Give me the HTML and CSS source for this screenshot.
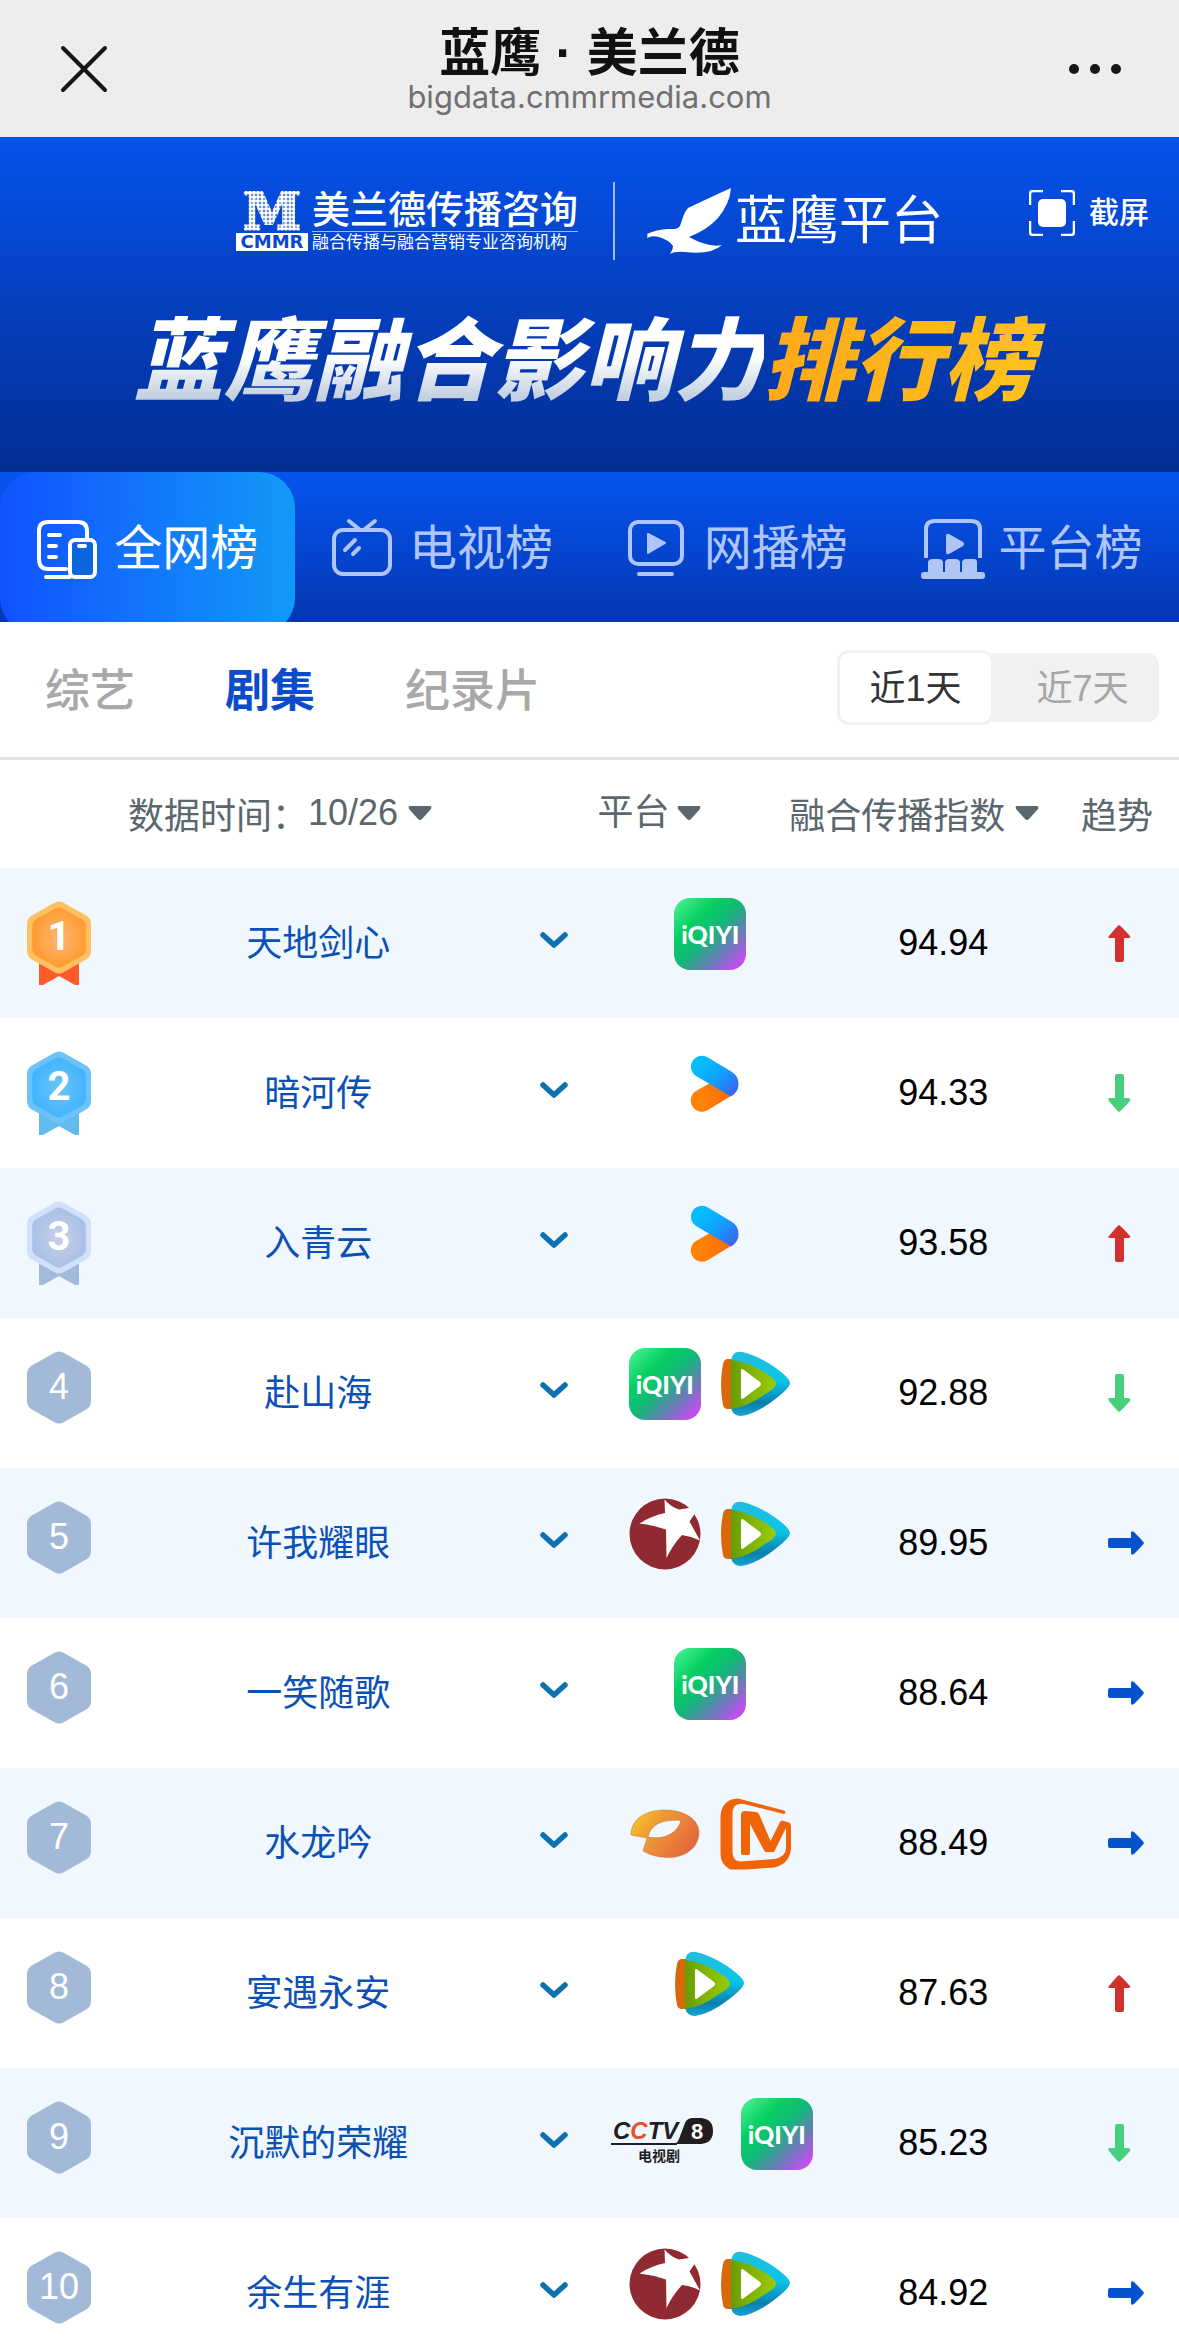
FILE: index.html
```html
<!DOCTYPE html>
<html lang="zh-CN">

<head>
  <meta charset="UTF-8" />
  <meta name="viewport" content="width=device-width, initial-scale=1.0" />
  <title>蓝鹰 · 美兰德</title>
  <link rel="stylesheet" href="styles.css">
</head>

<body>
  <!-- shared icons -->
  <svg class="sprite" width="0" height="0" aria-hidden="true">
    <defs>
      <linearGradient id="g-youku" x1="0" y1="0" x2="1" y2="0.8">
        <stop offset="0.2" stop-color="#04bdfd" />
        <stop offset="0.6" stop-color="#12a0ff" />
        <stop offset="1" stop-color="#3865f0" />
      </linearGradient>
      <linearGradient id="g-youku2" x1="0" y1="0" x2="1" y2="0">
        <stop offset="0.3" stop-color="#ff8205" />
        <stop offset="1" stop-color="#ff6a08" />
      </linearGradient>
      <linearGradient id="g-cyan" x1="0" y1="0" x2="0" y2="1">
        <stop offset="0" stop-color="#22bde0" />
        <stop offset="0.45" stop-color="#0cc4ea" />
        <stop offset="0.8" stop-color="#0880ac" />
        <stop offset="1" stop-color="#18a4cc" />
      </linearGradient>
      <linearGradient id="g-green" x1="0" y1="0" x2="1" y2="0">
        <stop offset="0" stop-color="#659a06" />
        <stop offset="0.3" stop-color="#7aad04" />
        <stop offset="1" stop-color="#9acb08" />
      </linearGradient>
      <linearGradient id="g-mango" x1="0" y1="0" x2="1" y2="0.5">
        <stop offset="0" stop-color="#f9d023" />
        <stop offset="0.4" stop-color="#ee9c36" />
        <stop offset="1" stop-color="#e46a3c" />
      </linearGradient>
      <radialGradient id="g-medal1">
        <stop offset="0" stop-color="#ffb877" />
        <stop offset="1" stop-color="#ff9b30" />
      </radialGradient>
      <radialGradient id="g-medal2">
        <stop offset="0" stop-color="#6dc4fa" />
        <stop offset="1" stop-color="#42b4fd" />
      </radialGradient>
      <radialGradient id="g-medal3">
        <stop offset="0" stop-color="#c9cfe8" />
        <stop offset="1" stop-color="#a9c0e6" />
      </radialGradient>
      <pattern id="dots" width="4" height="4" patternUnits="userSpaceOnUse">
        <circle cx="2" cy="2" r="2" fill="#fff" />
      </pattern>
      <clipPath id="disc">
        <circle cx="36" cy="36" r="36" />
      </clipPath>
    </defs>

    <symbol id="hex" viewBox="0 0 64 73">
      <path d="M27 2 Q32 -1 37 2 L60 15 Q64 18 64 23 V50 Q64 55 60 58 L37 71 Q32 74 27 71 L4 58 Q0 55 0 50 V23 Q0 18 4 15Z" />
    </symbol>
    <symbol id="ribbon" viewBox="0 0 40 28">
      <path d="M0 0 H40 V28 H36 L20 19 L4 28 H0Z" />
    </symbol>
    <symbol id="chevron" viewBox="0 0 28 18">
      <path d="M3 4 L14 14 L25 4" fill="none" stroke="#0c71b0" stroke-width="5.500" stroke-linecap="round" stroke-linejoin="round" />
    </symbol>
    <symbol id="caret" viewBox="0 0 24 14">
      <path d="M2 0 H22 Q24 0 23 3 L14 13 Q12 15 10 13 L1 3 Q0 0 2 0Z" fill="#5a676d" />
    </symbol>
    <symbol id="up" viewBox="0 0 36 38">
      <path d="M11 1 Q12 1 22 12 Q23 14 20 14 H16 V36 Q16 38 14 38 H9 Q7 38 7 36 V14 H2 Q-1 14 1 12 Q10 1 11 1Z" fill="#d22f2f" />
    </symbol>
    <symbol id="down" viewBox="0 0 36 38">
      <path d="M11 38 Q12 38 22 27 Q23 24 20 24 H16 V2 Q16 0 14 0 H9 Q7 0 7 2 V24 H2 Q-1 24 1 27 Q10 38 11 38Z" fill="#46d07c" />
    </symbol>
    <symbol id="flat" viewBox="0 0 36 38">
      <path d="M36 19 Q36 20 26 30 Q23 32 23 29 V24 H2 Q0 24 0 22 V16 Q0 14 2 14 H23 V9 Q23 6 26 8 Q36 18 36 19Z" fill="#0552cf" />
    </symbol>

    <symbol id="youku" viewBox="0 0 72 72">
      <path d="M36 35 L57 48 L34 62 A11 11 0 0 1 22 43Z" fill="url(#g-youku2)" />
      <path d="M34 9.500 L58 24 Q64.500 28 64.500 36 Q64.500 44 57 48.500 L22 28 A11 11 0 0 1 34 9.500Z" fill="url(#g-youku)" />
    </symbol>
    <symbol id="tencent" viewBox="0 0 72 72">
      <path d="M14 11 H8 Q4 11 3 16 Q-1 36 3 57 Q4 61 8 61 H14Z" fill="#d86808" />
      <path d="M11 12 Q13 2 22 4 Q36 7 53 18 Q70 30 70 35 Q70 40 54 52 Q36 66 21 68 Q13 68 11 60Z" fill="url(#g-cyan)" />
      <path d="M11 12 Q26 13 44 24 Q56 31 56 36 Q56 40 45 46 Q28 59 11 61Z" fill="url(#g-green)" />
      <path d="M21 22 Q22 20 24 22 L40 34 Q42 36 40 38 L24 50 Q22 52 21 50Z" fill="#fff" />
    </symbol>
    <symbol id="star" viewBox="0 0 72 72">
      <circle cx="36" cy="36" r="35.500" fill="#8f2a33" />
      <path d="M35.500 1.500 Q42 9 50 11.500 L60 10 L72 2 L65.500 16 L60.500 23.500 L71 42.500 Q62 38 53 37 Q43 48 37.500 60 L37 31.500 Q24 27 10.500 25.500 Q22 18 36 15Z" fill="#fff" clip-path="url(#disc)" />
    </symbol>
    <symbol id="hunan" viewBox="0 0 72 72">
      <path fill-rule="evenodd" d="M2 37 C2 20 18 12 36 12 C56 12 70 22 70 34 C70 50 56 60 38 59.500 Q24 59 14 53 L18 40Z M19 39 C22 26 34 21 52 22.500 C48 36 34 42 19 39Z" fill="url(#g-mango)" stroke="#b97832" stroke-width="0.500" />
    </symbol>
    <symbol id="mgtv" viewBox="0 0 72 72">
      <path d="M64 16 L24 6 Q12.500 4 12.500 16 V54 Q12.500 63.500 21 63.500 L54 61 Q66 59 66 50 V30 L54 54 H45 L30 26 V55 Q30 57 27 57 H23 Q21 57 21 55 V17 Q21 13 25 13 L36 14 Q38 14.500 39 16 L50.500 43 L60 24 Q61 22 64 23 L69 24.500 Q71 25 71 29 V50 Q70 66 54 69.500 L26 71.500 H10 Q0.500 66 0.500 56 V18 Q2 1 18 0.500 L64 12.500 Q67 14 64 16Z" fill="#ee6406" />
    </symbol>
  </svg>

  <header class="topbar">
    <button class="bar-btn" aria-label="关闭">
      <svg width="54" height="54" viewBox="0 0 54 54">
        <path d="M6 6 L48 48 M48 6 L6 48" stroke="#161616" stroke-width="4" stroke-linecap="round" />
      </svg>
    </button>
    <div class="bar-text">
      <h1>蓝鹰 · 美兰德</h1>
      <p>bigdata.cmmrmedia.com</p>
    </div>
    <button class="bar-btn more" aria-label="更多">
      <svg width="54" height="54" viewBox="0 0 54 54" fill="#161616">
        <circle cx="6" cy="27" r="5" />
        <circle cx="27" cy="27" r="5" />
        <circle cx="48" cy="27" r="5" />
      </svg>
    </button>
  </header>

  <section class="banner">
    <div class="logos">
      <div class="logo-cmmr">
        <svg width="72" height="60" viewBox="0 0 72 60">
          <text x="36" y="38" text-anchor="middle" font-family="DejaVu Serif, serif" font-weight="700" font-size="52" fill="url(#dots)" stroke="url(#dots)" stroke-width="3">M</text>
          <rect y="42" width="72" height="18" fill="#fff" />
          <text x="36" y="57" text-anchor="middle" font-family="DejaVu Sans, sans-serif" font-weight="700" font-size="18" fill="#0848cc">CMMR</text>
        </svg>
        <div class="cmmr-text">
          <strong>美兰德传播咨询</strong>
          <small>融合传播与融合营销专业咨询机构</small>
        </div>
      </div>
      <span class="logo-line"></span>
      <div class="logo-eagle">
        <svg width="84" height="66" viewBox="0 0 84 66" fill="#fff">
          <path d="M84 0 Q64 9 41 20 Q38 23 36 29 L33 38 Q31 41 28 41 H20 Q8 42 0 46 Q1 47 0 50 Q5 47 12 49 Q22 52 26 58 Q26 62 23 66 Q28 63 38 64 Q64 67 75 57 Q62 60 42 49 Q60 42 71 30 Q83 15 84 0Z" />
        </svg>
        <span>蓝鹰平台</span>
      </div>
      <button class="shot">
        <svg width="46" height="46" viewBox="0 0 46 46">
          <path d="M1 15 V4 Q1 1 4 1 H14 M32 1 H42 Q45 1 45 4 V15 M45 31 V42 Q45 45 42 45 H32 M14 45 H4 Q1 45 1 42 V31" fill="none" stroke="#fff" stroke-width="2.500" />
          <rect x="9" y="9" width="28" height="28" rx="5" fill="#fff" />
        </svg>
        <span>截屏</span>
      </button>
    </div>
    <h2 class="slogan"><span>蓝鹰融合影响力</span><em>排行榜</em></h2>
  </section>

  <nav class="tabs">
    <a class="tab active" href="#">
      <svg width="64" height="64" viewBox="0 0 64 64" fill="none" stroke="#fff" stroke-width="4" stroke-linecap="round">
        <path d="M30 54 H12 Q3 54 3 44 V16 Q3 7 12 7 H42 Q51 7 51 16 V24" />
        <path d="M13 20 H24 M13 31 H20 M13 42 H20" />
        <path d="M10 62 H34" />
        <rect x="34" y="25" width="25" height="37" rx="5" fill="#0a66dc" />
        <path d="M43 31 H49" />
      </svg>
      <span>全网榜</span>
    </a>
    <a class="tab" href="#">
      <svg width="64" height="64" viewBox="0 0 64 64" fill="none" stroke="#afc5ff" stroke-width="4" stroke-linecap="round">
        <rect x="3" y="15" width="56" height="44" rx="9" />
        <path d="M18 6 L28 14 M44 6 L34 14 M14 35 L24 25 M22 39 L28 33" />
      </svg>
      <span>电视榜</span>
    </a>
    <a class="tab" href="#">
      <svg width="64" height="64" viewBox="0 0 64 64" fill="none" stroke="#afc5ff" stroke-width="4" stroke-linecap="round">
        <rect x="4" y="7" width="52" height="42" rx="8" />
        <path d="M13 59 H46" />
        <path d="M22 19 L39 28 L22 38Z" fill="#afc5ff" stroke-width="2" stroke-linejoin="round" />
      </svg>
      <span>网播榜</span>
    </a>
    <a class="tab" href="#">
      <svg width="64" height="64" viewBox="0 0 64 64" fill="#afc5f8">
        <path d="M5 43 V14 Q5 6 14 6 H50 Q59 6 59 14 V43" fill="none" stroke="#afc5ff" stroke-width="4" />
        <path d="M25 21 Q25 18 28 19 L42 27 Q44 29 42 31 L28 39 Q25 40 25 37Z" />
        <path d="M7 59 V47 Q8 44 11 44 H18 Q21 44 22 47 V58 H24 V47 Q25 44 28 44 H35 Q38 44 39 47 V58 H41 V47 Q42 44 45 44 H53 Q56 44 56 47 V59Z" />
        <rect x="0" y="57" width="64" height="7" rx="3" />
      </svg>
      <span>平台榜</span>
    </a>
  </nav>

  <div class="filter">
    <div class="types">
      <button>综艺</button>
      <button class="active">剧集</button>
      <button>纪录片</button>
    </div>
    <div class="days">
      <button class="active">近1天</button>
      <button>近7天</button>
    </div>
  </div>

  <table class="rank">
    <colgroup>
      <col class="c-no">
      <col class="c-name">
      <col class="c-more">
      <col class="c-plat">
      <col class="c-index">
      <col class="c-trend">
    </colgroup>
    <thead>
      <tr>
        <th colspan="3">
          <div class="head date">
            <label for="date">数据时间：</label>
            <select id="date">
              <option>10/26</option>
            </select>
            <svg width="24" height="14"><use href="#caret" /></svg>
          </div>
        </th>
        <th>
          <div class="head plat">
            <select id="plat" aria-label="平台">
              <option>平台</option>
            </select>
            <svg width="24" height="14"><use href="#caret" /></svg>
          </div>
        </th>
        <th>
          <div class="head index">
            <button>融合传播指数 <svg width="24" height="14"><use href="#caret" /></svg></button>
          </div>
        </th>
        <th>趋势</th>
      </tr>
    </thead>
    <tbody>
      <tr>
        <td><svg class="medal" width="64" height="84" viewBox="0 0 64 84">
            <use href="#ribbon" x="12" y="56" width="40" height="28" fill="#ff5a28" />
            <use href="#hex" width="64" height="73" fill="#ffbf63" />
            <use href="#hex" x="5" y="6" width="54" height="61" fill="url(#g-medal1)" />
            <text x="32" y="49">1</text>
          </svg></td>
        <td class="name"><a href="#">天地剑心</a></td>
        <td><button class="open" aria-label="展开"><svg width="28" height="18"><use href="#chevron" /></svg></button></td>
        <td><div class="icons"><span class="iqiyi">iQIYI</span></div></td>
        <td>94.94</td>
        <td class="trend"><svg width="36" height="38"><use href="#up" /></svg></td>
      </tr>
      <tr>
        <td><svg class="medal" width="64" height="84" viewBox="0 0 64 84">
            <use href="#ribbon" x="12" y="56" width="40" height="28" fill="#5fbdec" />
            <use href="#hex" width="64" height="73" fill="#6cc3f8" />
            <use href="#hex" x="5" y="6" width="54" height="61" fill="url(#g-medal2)" />
            <text x="32" y="49">2</text>
          </svg></td>
        <td class="name"><a href="#">暗河传</a></td>
        <td><button class="open" aria-label="展开"><svg width="28" height="18"><use href="#chevron" /></svg></button></td>
        <td><div class="icons"><svg width="72" height="72"><use href="#youku" /></svg></div></td>
        <td>94.33</td>
        <td class="trend"><svg width="36" height="38"><use href="#down" /></svg></td>
      </tr>
      <tr>
        <td><svg class="medal" width="64" height="84" viewBox="0 0 64 84">
            <use href="#ribbon" x="12" y="56" width="40" height="28" fill="#a3bbdb" />
            <use href="#hex" width="64" height="73" fill="#d0e0fa" />
            <use href="#hex" x="5" y="6" width="54" height="61" fill="url(#g-medal3)" />
            <text x="32" y="49">3</text>
          </svg></td>
        <td class="name"><a href="#">入青云</a></td>
        <td><button class="open" aria-label="展开"><svg width="28" height="18"><use href="#chevron" /></svg></button></td>
        <td><div class="icons"><svg width="72" height="72"><use href="#youku" /></svg></div></td>
        <td>93.58</td>
        <td class="trend"><svg width="36" height="38"><use href="#up" /></svg></td>
      </tr>
      <tr>
        <td><svg class="medal plain" width="64" height="84" viewBox="0 0 64 84"><use href="#hex" width="64" height="73" /><text x="32" y="48">4</text></svg></td>
        <td class="name"><a href="#">赴山海</a></td>
        <td><button class="open" aria-label="展开"><svg width="28" height="18"><use href="#chevron" /></svg></button></td>
        <td><div class="icons"><span class="iqiyi">iQIYI</span><svg width="72" height="72"><use href="#tencent" /></svg></div></td>
        <td>92.88</td>
        <td class="trend"><svg width="36" height="38"><use href="#down" /></svg></td>
      </tr>
      <tr>
        <td><svg class="medal plain" width="64" height="84" viewBox="0 0 64 84"><use href="#hex" width="64" height="73" /><text x="32" y="48">5</text></svg></td>
        <td class="name"><a href="#">许我耀眼</a></td>
        <td><button class="open" aria-label="展开"><svg width="28" height="18"><use href="#chevron" /></svg></button></td>
        <td><div class="icons"><svg width="72" height="72"><use href="#star" /></svg><svg width="72" height="72"><use href="#tencent" /></svg></div></td>
        <td>89.95</td>
        <td class="trend"><svg width="36" height="38"><use href="#flat" /></svg></td>
      </tr>
      <tr>
        <td><svg class="medal plain" width="64" height="84" viewBox="0 0 64 84"><use href="#hex" width="64" height="73" /><text x="32" y="48">6</text></svg></td>
        <td class="name"><a href="#">一笑随歌</a></td>
        <td><button class="open" aria-label="展开"><svg width="28" height="18"><use href="#chevron" /></svg></button></td>
        <td><div class="icons"><span class="iqiyi">iQIYI</span></div></td>
        <td>88.64</td>
        <td class="trend"><svg width="36" height="38"><use href="#flat" /></svg></td>
      </tr>
      <tr>
        <td><svg class="medal plain" width="64" height="84" viewBox="0 0 64 84"><use href="#hex" width="64" height="73" /><text x="32" y="48">7</text></svg></td>
        <td class="name"><a href="#">水龙吟</a></td>
        <td><button class="open" aria-label="展开"><svg width="28" height="18"><use href="#chevron" /></svg></button></td>
        <td><div class="icons"><svg width="72" height="72"><use href="#hunan" /></svg><svg width="72" height="72"><use href="#mgtv" /></svg></div></td>
        <td>88.49</td>
        <td class="trend"><svg width="36" height="38"><use href="#flat" /></svg></td>
      </tr>
      <tr>
        <td><svg class="medal plain" width="64" height="84" viewBox="0 0 64 84"><use href="#hex" width="64" height="73" /><text x="32" y="48">8</text></svg></td>
        <td class="name"><a href="#">宴遇永安</a></td>
        <td><button class="open" aria-label="展开"><svg width="28" height="18"><use href="#chevron" /></svg></button></td>
        <td><div class="icons"><svg width="72" height="72"><use href="#tencent" /></svg></div></td>
        <td>87.63</td>
        <td class="trend"><svg width="36" height="38"><use href="#up" /></svg></td>
      </tr>
      <tr>
        <td><svg class="medal plain" width="64" height="84" viewBox="0 0 64 84"><use href="#hex" width="64" height="73" /><text x="32" y="48">9</text></svg></td>
        <td class="name"><a href="#">沉默的荣耀</a></td>
        <td><button class="open" aria-label="展开"><svg width="28" height="18"><use href="#chevron" /></svg></button></td>
        <td>
          <div class="icons">
            <svg width="114" height="72" viewBox="-3 0 114 72">
              <path d="M2 46 H62 Q66 46 68 41 L74 25 Q76 20 82 20 H90 Q102 21 102 33 Q102 45 90 46 Z" fill="#231d1f" />
              <text x="2" y="41" font-family="Liberation Sans, sans-serif" font-weight="700" font-style="italic" font-size="24" fill="#231d1f">C<tspan fill="#e8502c">C</tspan>TV</text>
              <path d="M0 46 H66" stroke="#231d1f" stroke-width="2" />
              <text x="86" y="41" text-anchor="middle" font-family="Liberation Sans, sans-serif" font-weight="700" font-size="22" fill="#fff">8</text>
              <text x="48" y="63" text-anchor="middle" font-family="Noto Sans CJK SC, sans-serif" font-weight="700" font-size="14" fill="#231d1f">电视剧</text>
            </svg>
            <span class="iqiyi">iQIYI</span>
          </div>
        </td>
        <td>85.23</td>
        <td class="trend"><svg width="36" height="38"><use href="#down" /></svg></td>
      </tr>
      <tr>
        <td><svg class="medal plain" width="64" height="84" viewBox="0 0 64 84"><use href="#hex" width="64" height="73" /><text x="32" y="48">10</text></svg></td>
        <td class="name"><a href="#">余生有涯</a></td>
        <td><button class="open" aria-label="展开"><svg width="28" height="18"><use href="#chevron" /></svg></button></td>
        <td><div class="icons"><svg width="72" height="72"><use href="#star" /></svg><svg width="72" height="72"><use href="#tencent" /></svg></div></td>
        <td>84.92</td>
        <td class="trend"><svg width="36" height="38"><use href="#flat" /></svg></td>
      </tr>
    </tbody>
  </table>
</body>

</html>
```
FILE: styles.css
```css
* {
  margin: 0;
  padding: 0;
  box-sizing: border-box;
}

body {
  height: 100vh;
  overflow: hidden;
  background: #fff;
  font-family: "Liberation Sans", "Noto Sans CJK SC", sans-serif;
  font-size: 36px;
}

button,
select {
  border: none;
  background: none;
  font: inherit;
  color: inherit;
  cursor: pointer;
}

a {
  color: inherit;
  text-decoration: none;
}

svg {
  display: block;
  flex-shrink: 0;
}

.sprite {
  position: absolute;
}

/* top bar */
.topbar {
  display: grid;
  grid-template-columns: 1fr auto 1fr;
  align-items: center;
  padding: 26px 57px 25px;
  background: #ededed;
  text-align: center;
}

.bar-btn {
  justify-self: start;
}

.bar-btn.more {
  justify-self: end;
}

.bar-text h1 {
  font-size: 51px;
  font-weight: 700;
  line-height: 56px;
  color: #111;
}

.bar-text p {
  font-family: Inter, sans-serif;
  font-size: 31px;
  line-height: 30px;
  color: #707070;
}

/* banner */
.banner {
  padding: 45px 30px 62px;
  background: linear-gradient(#0652ec, #032d92);
  color: #fff;
}

.logos {
  display: grid;
  grid-template-columns: 1fr auto auto auto 1fr;
  align-items: center;
}

.logo-cmmr {
  grid-column: 2;
  display: flex;
  align-items: center;
  gap: 4px;
}

.cmmr-text strong {
  display: block;
  border-bottom: 1px solid #9cbcf8;
  font-size: 38px;
  font-weight: 500;
  line-height: 42px;
}

.cmmr-text small {
  display: block;
  font-size: 17px;
  line-height: 22px;
}

.logo-line {
  width: 2px;
  height: 78px;
  margin: 0 32px 0 35px;
  background: #9cc0ff;
}

.logo-eagle {
  display: flex;
  align-items: center;
  gap: 4px;
  font-size: 52px;
  line-height: 66px;
}

.shot {
  display: flex;
  align-items: center;
  align-self: start;
  justify-self: end;
  gap: 14px;
  margin-top: 6px;
  font-size: 30px;
  font-weight: 500;
}

.shot span,
.tab span {
  padding-bottom: 6px;
}

.slogan {
  margin-top: 54px;
  font-size: 90px;
  font-weight: 900;
  font-style: italic;
  line-height: 96px;
  text-align: center;
}

.slogan span,
.slogan em {
  background: linear-gradient(#fff 45%, #c3d0e2 85%);
  -webkit-background-clip: text;
  background-clip: text;
  color: transparent;
}

.slogan em {
  padding-right: 12px;
  background-image: linear-gradient(90deg, #ffa81a, #ffc21c);
}

/* main tabs */
.tabs {
  display: flex;
  height: 150px;
  overflow: hidden;
  background: linear-gradient(#0655f0, #0437b2);
}

.tab {
  flex: 1;
  display: flex;
  align-items: center;
  justify-content: center;
  gap: 14px;
  height: 162px;
  padding-bottom: 12px;
  font-size: 48px;
  color: #afc5ff;
}

.tab.active {
  border-radius: 36px;
  background: linear-gradient(90deg, #1152ff, #129af8);
  color: #fff;
}

/* type and day filter */
.filter {
  display: flex;
  align-items: center;
  justify-content: space-between;
  height: 138px;
  padding: 0 20px 5px 45px;
  border-bottom: 3px solid #e2e2e2;
}

.types {
  display: flex;
  gap: 90px;
}

.types button {
  font-size: 45px;
  font-weight: 500;
  color: #a8a8a8;
}

.types .active {
  font-weight: 700;
  color: #0a4ccc;
}

.days {
  display: flex;
  align-items: center;
}

.days button {
  height: 69px;
  width: 177px;
  margin-left: -12px;
  padding: 0 0 4px 24px;
  border-radius: 12px;
  background: #f1f1f1;
  color: #a6a6a6;
}

.days .active {
  position: relative;
  width: 157px;
  height: 75px;
  padding-left: 0;
  border: 3px solid #f1f1f1;
  background: #fff;
  color: #333;
}

/* ranking table */
.rank {
  width: 100%;
  table-layout: fixed;
  border-collapse: collapse;
  text-align: center;
}

.c-no {
  width: 10%;
}

.c-name {
  width: 34%;
}

.c-more {
  width: 6%;
}

.c-plat {
  width: 20.5%;
}

.c-index {
  width: 19%;
}

.c-trend {
  width: 10.5%;
}

.rank th {
  height: 108px;
  padding-bottom: 3px;
  font-weight: 400;
  color: #5a676d;
  white-space: nowrap;
}

.rank select {
  appearance: none;
}

.head,
.head button {
  display: flex;
  align-items: center;
  gap: 10px;
}

.head.date {
  gap: 0;
  padding-left: 128px;
}

.head.date svg {
  margin-left: 9px;
}

.head.plat {
  gap: 6px;
  padding-left: 8px;
}

.head.index {
  justify-content: flex-end;
  padding-right: 16px;
}

.rank td {
  height: 150px;
}

.rank tbody tr:nth-child(odd) {
  background: #f0f7fe;
}

.rank .name {
  padding-bottom: 6px;
  color: #0b51b5;
}

.medal {
  margin: 0 auto;
}

.medal text {
  font-family: Roboto, sans-serif;
  font-size: 40px;
  font-weight: 700;
  text-anchor: middle;
  fill: #fff;
}

.medal.plain {
  fill: #a3b9d8;
}

.medal.plain text {
  font-family: "Liberation Sans", sans-serif;
  font-size: 36px;
  font-weight: 400;
}

.open {
  display: block;
  margin: 0 auto;
  padding-bottom: 6px;
}

.icons {
  display: flex;
  justify-content: center;
  gap: 19px;
  padding-bottom: 18px;
}

.iqiyi {
  width: 72px;
  height: 72px;
  border-radius: 16px;
  background: linear-gradient(135deg, #4df59a, #06d060 30%, #12b878 50%, #6a7bb8 72%, #c050ee 90%);
  font-family: Lato, sans-serif;
  font-size: 25px;
  font-weight: 900;
  line-height: 72px;
  color: #fff;
}

.rank .trend {
  padding-left: 53px;
}
```
